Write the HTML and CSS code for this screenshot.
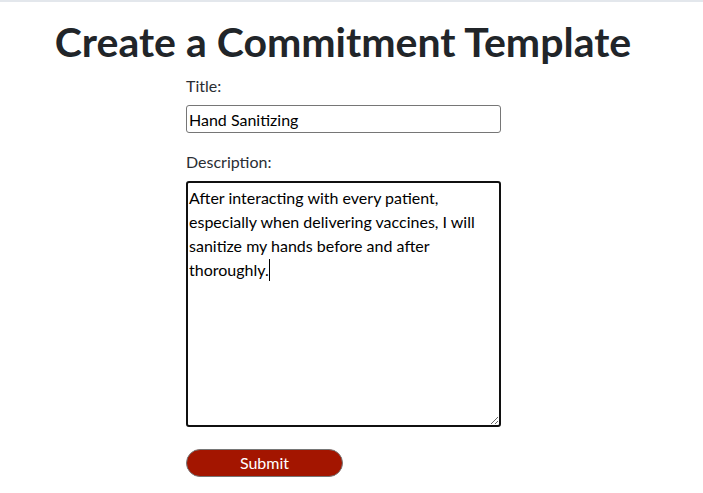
FILE: index.html
```html
<!DOCTYPE html>
<html>
<head>
<meta charset="utf-8">
<link rel="stylesheet" href="styles.css">
</head>
<body>
<div class="topbar"></div>
<main class="page">
  <h1 class="title">Create a Commitment Template</h1>
  <form class="form">
    <label class="label" for="t">Title:</label>
    <input class="input" id="t" type="text" value="Hand Sanitizing">
    <label class="label label-desc" for="d">Description:</label>
    <div class="area-wrap"><textarea class="area" id="d">After interacting with every patient, especially when delivering vaccines, I will sanitize my hands before and after thoroughly.</textarea><span class="caret"></span></div>
    <button class="submit" type="button">Submit</button>
  </form>
</main>
</body>
</html>
```

FILE: styles.css
```css
html, body {
  margin: 0;
  padding: 0;
  background: #ffffff;
}
body {
  font-family: Lato, "Open Sans", sans-serif;
  color: #212529;
  font-size: 16px;
  line-height: 1.5;
}
.topbar {
  height: 2px;
  background: #e3e7ec;
}
.page {
  display: flex;
  flex-direction: column;
}
.title {
  margin: 16px 0 0 0;
  padding-right: 17px;
  text-align: center;
  font-size: 41px;
  font-weight: 700;
  line-height: 48px;
  color: #212529;
}
.form {
  margin: 8px 0 0 186px;
  width: 315px;
  display: flex;
  flex-direction: column;
}
.label {
  display: block;
  font-size: 16px;
  line-height: 24px;
  margin-bottom: 7px;
  color: #2a2e33;
}
.label-desc {
  margin-top: 17px;
}
.input {
  box-sizing: border-box;
  width: 315px;
  height: 28px;
  margin: 0;
  padding: 1px 2px;
  border: 1px solid #767676;
  border-radius: 3px;
  font-family: inherit;
  font-size: 16px;
  color: #000;
}
.area-wrap {
  position: relative;
  width: 315px;
  height: 246px;
}
.area {
  box-sizing: border-box;
  display: block;
  width: 315px;
  height: 246px;
  margin: 0;
  padding: 3px 1px 2px;
  border: 2px solid #101010;
  border-radius: 3px;
  font-family: inherit;
  font-size: 16px;
  line-height: 24px;
  color: #000;
  resize: vertical;
  outline: none;
}
.caret {
  position: absolute;
  left: 83px;
  top: 78px;
  width: 1px;
  height: 22px;
  background: #000;
}
.submit {
  box-sizing: border-box;
  margin-top: 22px;
  width: 157px;
  height: 28px;
  padding: 0;
  border: 1px solid #767676;
  border-radius: 14px;
  background: #a31500;
  color: #ffffff;
  font-family: inherit;
  font-size: 16px;
  line-height: 24px;
}
```
